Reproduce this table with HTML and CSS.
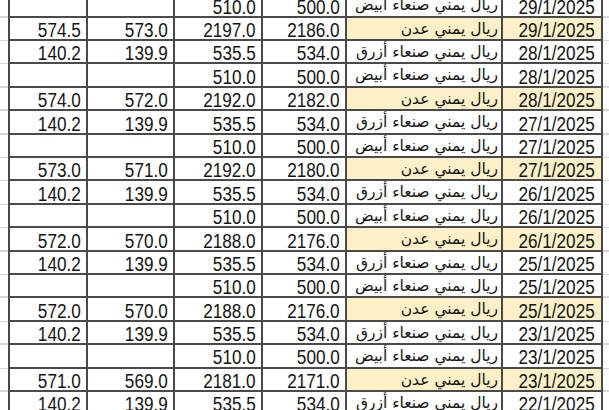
FILE: index.html
```html
<!DOCTYPE html>
<html lang="ar">
<head>
<meta charset="utf-8">
<title>أسعار الريال اليمني</title>
<link rel="stylesheet" href="styles.css">
</head>
<body>
<div class="sheet">
  <div class="row">
    <div class="gut-r"></div><div class="cell date"><span class="v">29/1/2025</span></div><div class="cell name">ريال يمني صنعاء ابيض</div><div class="cell c3"><span class="v">500.0</span></div><div class="cell c4"><span class="v">510.0</span></div><div class="cell c5"></div><div class="cell c6"></div><div class="gut-l"></div>
  </div>
  <div class="row">
    <div class="gut-r"></div><div class="cell date hl"><span class="v">29/1/2025</span></div><div class="cell name hl">ريال يمني عدن</div><div class="cell c3"><span class="v">2186.0</span></div><div class="cell c4"><span class="v">2197.0</span></div><div class="cell c5"><span class="v">573.0</span></div><div class="cell c6"><span class="v">574.5</span></div><div class="gut-l"></div>
  </div>
  <div class="row">
    <div class="gut-r"></div><div class="cell date"><span class="v">28/1/2025</span></div><div class="cell name">ريال يمني صنعاء أزرق</div><div class="cell c3"><span class="v">534.0</span></div><div class="cell c4"><span class="v">535.5</span></div><div class="cell c5"><span class="v">139.9</span></div><div class="cell c6"><span class="v">140.2</span></div><div class="gut-l"></div>
  </div>
  <div class="row">
    <div class="gut-r"></div><div class="cell date"><span class="v">28/1/2025</span></div><div class="cell name">ريال يمني صنعاء أبيض</div><div class="cell c3"><span class="v">500.0</span></div><div class="cell c4"><span class="v">510.0</span></div><div class="cell c5"></div><div class="cell c6"></div><div class="gut-l"></div>
  </div>
  <div class="row">
    <div class="gut-r"></div><div class="cell date hl"><span class="v">28/1/2025</span></div><div class="cell name hl">ريال يمني عدن</div><div class="cell c3"><span class="v">2182.0</span></div><div class="cell c4"><span class="v">2192.0</span></div><div class="cell c5"><span class="v">572.0</span></div><div class="cell c6"><span class="v">574.0</span></div><div class="gut-l"></div>
  </div>
  <div class="row">
    <div class="gut-r"></div><div class="cell date"><span class="v">27/1/2025</span></div><div class="cell name">ريال يمني صنعاء أزرق</div><div class="cell c3"><span class="v">534.0</span></div><div class="cell c4"><span class="v">535.5</span></div><div class="cell c5"><span class="v">139.9</span></div><div class="cell c6"><span class="v">140.2</span></div><div class="gut-l"></div>
  </div>
  <div class="row">
    <div class="gut-r"></div><div class="cell date"><span class="v">27/1/2025</span></div><div class="cell name">ريال يمني صنعاء أبيض</div><div class="cell c3"><span class="v">500.0</span></div><div class="cell c4"><span class="v">510.0</span></div><div class="cell c5"></div><div class="cell c6"></div><div class="gut-l"></div>
  </div>
  <div class="row">
    <div class="gut-r"></div><div class="cell date hl"><span class="v">27/1/2025</span></div><div class="cell name hl">ريال يمني عدن</div><div class="cell c3"><span class="v">2180.0</span></div><div class="cell c4"><span class="v">2192.0</span></div><div class="cell c5"><span class="v">571.0</span></div><div class="cell c6"><span class="v">573.0</span></div><div class="gut-l"></div>
  </div>
  <div class="row">
    <div class="gut-r"></div><div class="cell date"><span class="v">26/1/2025</span></div><div class="cell name">ريال يمني صنعاء أزرق</div><div class="cell c3"><span class="v">534.0</span></div><div class="cell c4"><span class="v">535.5</span></div><div class="cell c5"><span class="v">139.9</span></div><div class="cell c6"><span class="v">140.2</span></div><div class="gut-l"></div>
  </div>
  <div class="row">
    <div class="gut-r"></div><div class="cell date"><span class="v">26/1/2025</span></div><div class="cell name">ريال يمني صنعاء أبيض</div><div class="cell c3"><span class="v">500.0</span></div><div class="cell c4"><span class="v">510.0</span></div><div class="cell c5"></div><div class="cell c6"></div><div class="gut-l"></div>
  </div>
  <div class="row">
    <div class="gut-r"></div><div class="cell date hl"><span class="v">26/1/2025</span></div><div class="cell name hl">ريال يمني عدن</div><div class="cell c3"><span class="v">2176.0</span></div><div class="cell c4"><span class="v">2188.0</span></div><div class="cell c5"><span class="v">570.0</span></div><div class="cell c6"><span class="v">572.0</span></div><div class="gut-l"></div>
  </div>
  <div class="row">
    <div class="gut-r"></div><div class="cell date"><span class="v">25/1/2025</span></div><div class="cell name">ريال يمني صنعاء أزرق</div><div class="cell c3"><span class="v">534.0</span></div><div class="cell c4"><span class="v">535.5</span></div><div class="cell c5"><span class="v">139.9</span></div><div class="cell c6"><span class="v">140.2</span></div><div class="gut-l"></div>
  </div>
  <div class="row">
    <div class="gut-r"></div><div class="cell date"><span class="v">25/1/2025</span></div><div class="cell name">ريال يمني صنعاء أبيض</div><div class="cell c3"><span class="v">500.0</span></div><div class="cell c4"><span class="v">510.0</span></div><div class="cell c5"></div><div class="cell c6"></div><div class="gut-l"></div>
  </div>
  <div class="row">
    <div class="gut-r"></div><div class="cell date hl"><span class="v">25/1/2025</span></div><div class="cell name hl">ريال يمني عدن</div><div class="cell c3"><span class="v">2176.0</span></div><div class="cell c4"><span class="v">2188.0</span></div><div class="cell c5"><span class="v">570.0</span></div><div class="cell c6"><span class="v">572.0</span></div><div class="gut-l"></div>
  </div>
  <div class="row">
    <div class="gut-r"></div><div class="cell date"><span class="v">23/1/2025</span></div><div class="cell name">ريال يمني صنعاء أزرق</div><div class="cell c3"><span class="v">534.0</span></div><div class="cell c4"><span class="v">535.5</span></div><div class="cell c5"><span class="v">139.9</span></div><div class="cell c6"><span class="v">140.2</span></div><div class="gut-l"></div>
  </div>
  <div class="row">
    <div class="gut-r"></div><div class="cell date"><span class="v">23/1/2025</span></div><div class="cell name">ريال يمني صنعاء أبيض</div><div class="cell c3"><span class="v">500.0</span></div><div class="cell c4"><span class="v">510.0</span></div><div class="cell c5"></div><div class="cell c6"></div><div class="gut-l"></div>
  </div>
  <div class="row">
    <div class="gut-r"></div><div class="cell date hl"><span class="v">23/1/2025</span></div><div class="cell name hl">ريال يمني عدن</div><div class="cell c3"><span class="v">2171.0</span></div><div class="cell c4"><span class="v">2181.0</span></div><div class="cell c5"><span class="v">569.0</span></div><div class="cell c6"><span class="v">571.0</span></div><div class="gut-l"></div>
  </div>
  <div class="row">
    <div class="gut-r"></div><div class="cell date"><span class="v">22/1/2025</span></div><div class="cell name">ريال يمني صنعاء أزرق</div><div class="cell c3"><span class="v">534.0</span></div><div class="cell c4"><span class="v">535.5</span></div><div class="cell c5"><span class="v">139.9</span></div><div class="cell c6"><span class="v">140.2</span></div><div class="gut-l"></div>
  </div>
</div>
</body>
</html>
```

FILE: styles.css
```css
html, body {
  margin: 0;
  padding: 0;
  background: #ffffff;
  overflow: hidden;
}

body {
  font-family: "Liberation Sans", Arial, sans-serif;
  color: #141414;
}

.sheet {
  margin-top: -5.7px;
}

.row {
  display: flex;
  flex-direction: row-reverse;
  height: 23.4px;
  background: linear-gradient(to top, #d6d6d6 1.5px, transparent 1.5px);
}

.gut-r {
  width: 6px;
  flex: none;
}

.gut-l {
  flex: 1;
}

.cell {
  flex: none;
  box-sizing: border-box;
  height: 100%;
  border-left: 2px solid #4a4a4a;
  border-bottom: 2px solid #4a4a4a;
  background: #ffffff;
  text-align: right;
  padding: 4.3px 5px 0 0;
  font-size: 19.5px;
  line-height: 17px;
  white-space: nowrap;
  overflow: visible;
}

.v {
  display: inline-block;
  transform: scaleX(0.88);
  transform-origin: right center;
}

.date {
  width: 102px;
  border-right: 2px solid #4a4a4a;
  padding-right: 6px;
}

.name {
  width: 156px;
  direction: rtl;
  text-align: right;
  font-family: "DejaVu Sans", "Noto Sans", sans-serif;
  font-size: 15.5px;
  padding-right: 3px;
  padding-top: 3px;
}

.c3 { width: 84px; }
.c4 { width: 88px; }
.c5 { width: 87px; }
.c6 { width: 78px; }

.hl {
  background: #fcf0c9;
}
```
